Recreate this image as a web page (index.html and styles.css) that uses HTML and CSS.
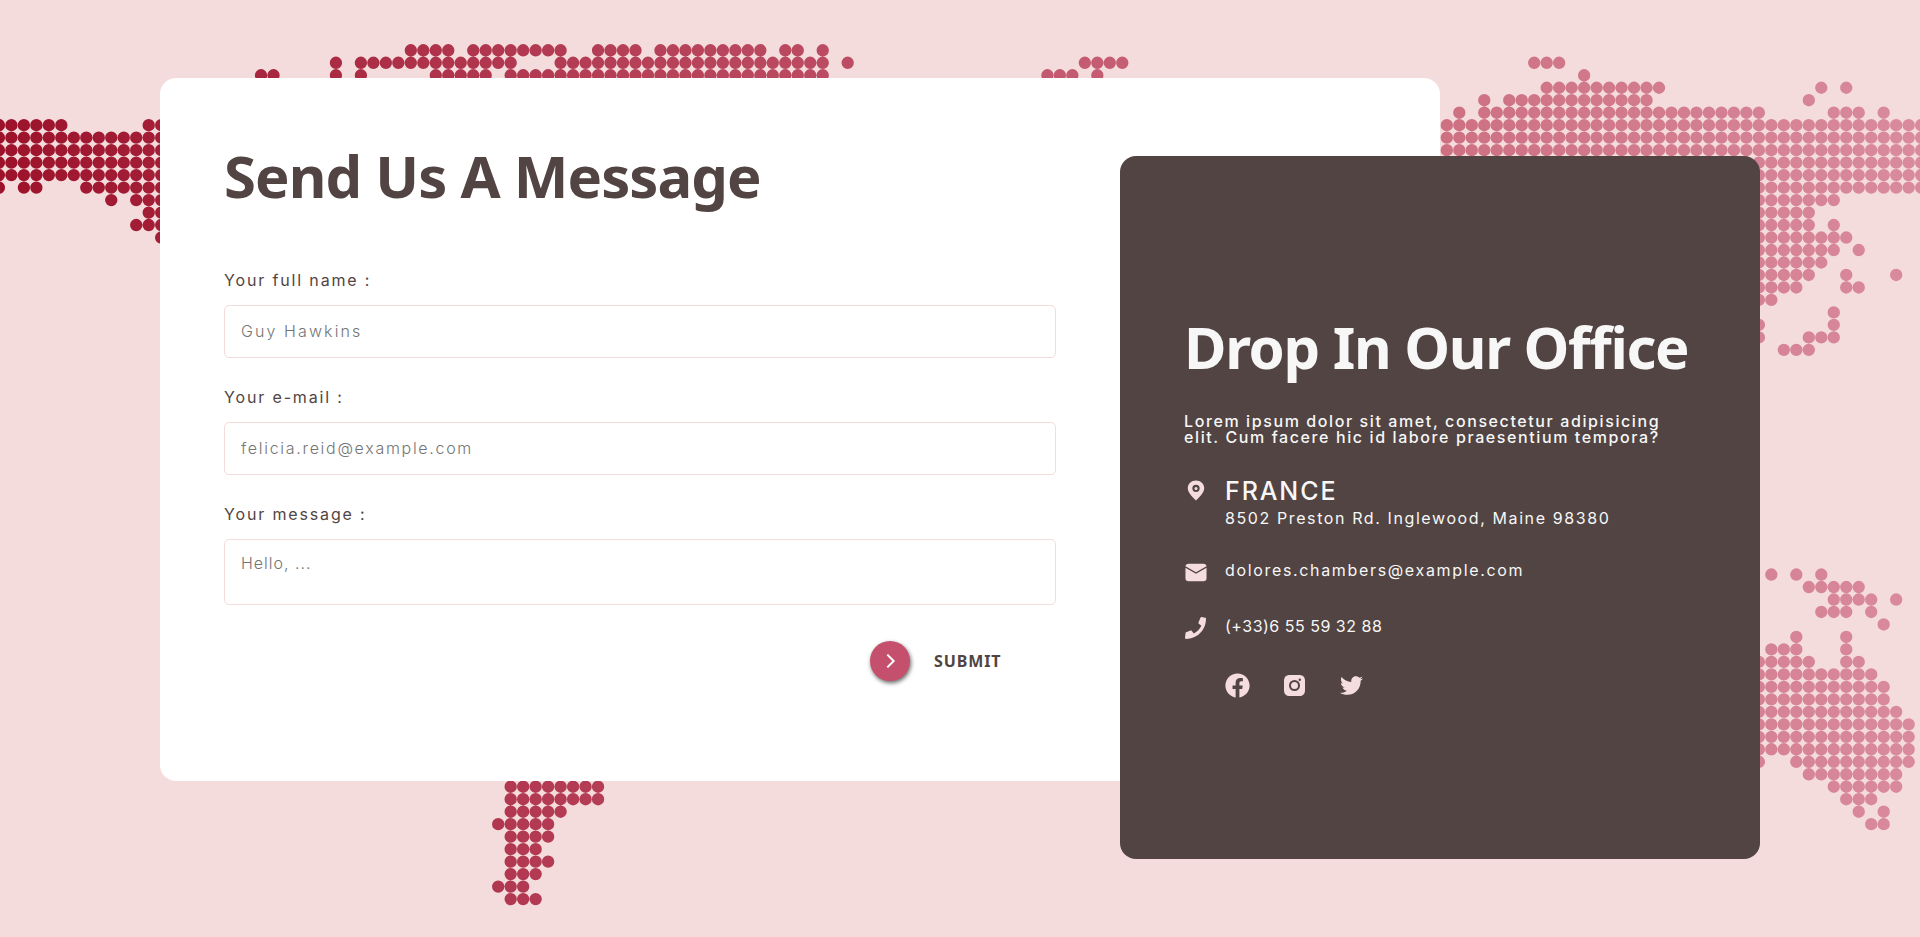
FILE: index.html
```html
<!DOCTYPE html>
<html lang="en">
<head>
<meta charset="utf-8">
<title>Contact</title>
<link rel="stylesheet" href="styles.css">
</head>
<body>
<main class="page">
  <!-- Dotted world map: one unit per dot, each run is a round-capped dashed line -->
  <svg class="map" viewBox="-0.9133 -4.03 153.822 75.068" preserveAspectRatio="none" aria-hidden="true">
    <defs>
      <linearGradient id="tint" gradientUnits="userSpaceOnUse" x1="-1" y1="0" x2="153" y2="0">
        <stop offset="0" stop-color="#9d122b"/>
        <stop offset=".28" stop-color="#b23a52"/>
        <stop offset=".6" stop-color="#c65f75"/>
        <stop offset=".75" stop-color="#cd7082"/>
        <stop offset="1" stop-color="#d98b9d"/>
      </linearGradient>
    </defs>
    <path class="dots" stroke="url(#tint)" d="
      M32 0H35.01M37 0H44.01M47 0H50.01M52 0H60.01M62 0H63.01M65 0H65.01
      M26 1H26.01M28 1H40.01M44 1H65.01M67 1H67.01M86 1H89.01M122 1H124.01
      M20 2H21.01M26 2H26.01M28 2H28.01M34 2H38.01M40 2H65.01M83 2H85.01M87 2H87.01M126 2H126.01
      M123 3H132.01M145 3H145.01M147 3H147.01
      M118 4H118.01M120 4H131.01M144 4H144.01
      M116 5H116.01M118 5H140.01M146 5H148.01M150 5H150.01
      M-1 6H4.01M11 6H12.01M115 6H153.01
      M-1 7H12.01M115 7H153.01
      M-1 8H12.01M115 8H153.01
      M-1 9H12.01M138 9H153.01
      M-1 10H12.01M138 10H153.01
      M-1 11H-.99M1 11H2.01M6 11H12.01M140 11H153.01
      M8 12H8.01M10 12H12.01M140 12H146.01
      M11 13H12.01M140 13H144.01
      M10 14H12.01M140 14H144.01M146 14H146.01
      M12 15H12.01M140 15H147.01
      M140 16H146.01M148 16H148.01
      M140 17H145.01
      M140 18H144.01M147 18H147.01M151 18H151.01
      M140 19H143.01M147 19H148.01
      M140 20H141.01
      M146 21H146.01
      M140 22H140.01M146 22H146.01
      M140 23H140.01M144 23H146.01
      M142 24H144.01
      M141 42H141.01M143 42H143.01M145 42H145.01
      M144 43H148.01
      M146 44H149.01M151 44H151.01
      M145 45H147.01M149 45H149.01
      M150 46H150.01
      M143 47H143.01M147 47H147.01
      M141 48H143.01M147 48H147.01
      M140 49H144.01M147 49H148.01
      M140 50H149.01
      M140 51H150.01
      M140 52H150.01
      M140 53H151.01
      M140 54H152.01
      M140 55H152.01
      M140 56H152.01
      M140 57H140.01M143 57H152.01
      M144 58H151.01
      M40 59H47.01M146 59H151.01
      M40 60H47.01M147 60H149.01
      M40 61H44.01M148 61H148.01M150 61H150.01
      M39 62H43.01M149 62H150.01
      M40 63H43.01
      M40 64H42.01
      M40 65H43.01
      M40 66H42.01
      M39 67H41.01
      M40 68H42.01"/>
  </svg>

  <section class="card">
    <form class="form">
      <h1 class="title">Send Us A Message</h1>
      <label class="field"><span class="label">Your full name :</span>
        <input class="control ph-name" type="text" placeholder="Guy Hawkins"></label>
      <label class="field"><span class="label">Your e-mail :</span>
        <input class="control ph-mail" type="email" placeholder="felicia.reid@example.com"></label>
      <label class="field"><span class="label">Your message :</span>
        <textarea class="control area" placeholder="Hello, ..."></textarea></label>
      <button class="submit" type="button">
        <span class="submit-disc"><svg width="10" height="16" viewBox="0 0 10 16"><path d="M1.300 1.600 7.700 8l-6.400 6.400" fill="none" stroke="#fff" stroke-width="2"/></svg></span>
        <span class="submit-text">SUBMIT</span>
      </button>
    </form>
  </section>

  <aside class="office">
    <h2 class="title office-title">Drop In Our Office</h2>
    <p class="intro">Lorem ipsum dolor sit amet, consectetur adipisicing<br>elit. Cum facere hic id labore praesentium tempora?</p>
    <div class="row row-place">
      <svg class="icon" viewBox="0 0 24 24"><path fill-rule="evenodd" d="M12 1.500c-5 0-9 3.700-9 8.400C3 15.500 9.300 21 12 23.500 14.700 21 21 15.500 21 9.900 21 5.200 17 1.500 12 1.500Zm0 4.700a4 4 0 1 1 0 8 4 4 0 0 1 0-8Zm0 2.400a1.700 1.700 0 1 0 0 3.400 1.700 1.700 0 0 0 0-3.400Z"/></svg>
      <div><div class="country">FRANCE</div><div class="street">8502 Preston Rd. Inglewood, Maine 98380</div></div>
    </div>
    <div class="row row-mail">
      <svg class="icon" viewBox="0 0 24 24"><path d="M4 3h16c2 0 3.500 1 3.500 2.700L12 12.300.500 5.700C.500 4 2 3 4 3ZM.500 7.400 12 14 23.500 7.400V19c0 2-1.300 3-3.500 3H4c-2.200 0-3.500-1-3.500-3Z"/></svg>
      <div class="mail">dolores.chambers@example.com</div>
    </div>
    <div class="row row-phone">
      <svg class="icon" viewBox="0 0 512 512"><path d="M493.400 24.600l-104-24c-11.300-2.600-22.900 3.300-27.500 13.900l-48 112c-4.200 9.800-1.400 21.300 6.900 28l60.600 49.600c-36 76.700-98.900 140.500-177.200 177.200l-49.600-60.600c-6.800-8.300-18.200-11.100-28-6.900l-112 48C3.900 466.500-2 478.100.600 489.400c3 14 12 22.600 23.400 22.600 256 0 464-207.500 464-464 0-11.200 5-20.900 5.400-23.400z"/></svg>
      <div class="phone">(+33)6 55 59 32 88</div>
    </div>
    <div class="social">
      <svg class="fb" viewBox="0 0 512 512"><path d="M504 256C504 119 393 8 256 8S8 119 8 256c0 123.780 90.690 226.380 209.250 245V327.690h-63V256h63v-54.640c0-62.150 37-96.480 93.670-96.480 27.140 0 55.520 4.840 55.520 4.840v61h-31.280c-30.800 0-40.410 19.120-40.410 38.730V256h68.780l-11 71.690h-57.780V501C413.310 482.380 504 379.780 504 256z"/></svg>
      <svg class="ig" viewBox="0 0 21 21"><path fill-rule="evenodd" d="M6 0h9c4 0 6 2 6 6v9c0 4-2 6-6 6H6c-4 0-6-2-6-6V6c0-4 2-6 6-6Zm4.500 5a5.500 5.500 0 1 0 0 11 5.500 5.500 0 0 0 0-11Zm0 2a3.500 3.500 0 1 1 0 7 3.500 3.500 0 0 1 0-7Zm5.300-3.400a1.200 1.200 0 1 0 0 2.400 1.200 1.200 0 0 0 0-2.400Z"/></svg>
      <svg class="tw" viewBox="0 48 512 416"><path d="M459.370 151.716c.325 4.548.325 9.097.325 13.645 0 138.720-105.583 298.558-298.558 298.558-59.452 0-114.680-17.219-161.137-47.106 8.447.974 16.568 1.299 25.340 1.299 49.055 0 94.213-16.568 130.274-44.832-46.132-.975-84.792-31.188-98.112-72.772 6.498.974 12.995 1.624 19.818 1.624 9.421 0 18.843-1.300 27.614-3.573-48.081-9.747-84.143-51.980-84.143-102.985v-1.299c13.969 7.797 30.214 12.670 47.431 13.319-28.264-18.843-46.781-51.005-46.781-87.391 0-19.492 5.197-37.360 14.294-52.954 51.655 63.675 129.300 105.258 216.365 109.807-1.624-7.797-2.599-15.918-2.599-24.040 0-57.828 46.782-104.934 104.934-104.934 30.213 0 57.502 12.670 76.670 33.137 23.715-4.548 46.456-13.320 66.599-25.340-7.798 24.366-24.366 44.833-46.132 57.827 21.117-2.273 41.584-8.122 60.426-16.243-14.292 20.791-32.161 39.308-52.628 54.253z"/></svg>
    </div>
  </aside>
</main>
</body>
</html>
```

FILE: styles.css
```css
* { box-sizing: border-box; margin: 0; padding: 0; }

body {
  font: 16px/16px Inter, "Noto Sans", sans-serif;
  background: #f4dcdc;
  color: #514442;
  overflow: hidden;
}

.page {
  position: relative;
  width: 1920px;
  height: 937px;
  padding: 78px 160px;
  overflow: hidden;
}

.map {
  position: absolute;
  inset: 0;
  width: 1920px;
  height: 937px;
}

.dots {
  fill: none;
  stroke-width: .99;
  stroke-linecap: round;
  stroke-dasharray: 0 1;
}

.card {
  position: relative;
  width: 1280px;
  height: 703px;
  padding: 69px 64px 0;
  background: #fff;
  border-radius: 16px;
}

/* The office panel overlaps the form card */
.office {
  position: absolute;
  left: 1120px;
  top: 156px;
  width: 640px;
  height: 703px;
  padding: 162px 64px 0;
  background: #514442;
  color: #f7f7f7;
  border-radius: 16px;
}

.form {
  display: flex;
  flex-direction: column;
  width: 832px;
}

.title {
  font: 700 58px/58px "Noto Sans", sans-serif;
  letter-spacing: -.95px;
  white-space: nowrap;
}

.form .title { margin-bottom: 67px; }
.office .office-title { letter-spacing: -1.3px; }

.field {
  display: flex;
  flex-direction: column;
  gap: 17px;
  margin-bottom: 31px;
}

.label { letter-spacing: 1.85px; white-space: nowrap; }

.control {
  height: 53px;
  padding: 0 16px 2px;
  font: 300 16px/20px Inter, "Noto Sans", sans-serif;
  letter-spacing: 1px;
  border: 1px solid #f4dcdc;
  border-radius: 5px;
  background: #fff;
  outline: none;
  resize: none;
}

.control::placeholder { color: #757575; }
.ph-name { letter-spacing: 2.1px; }
.ph-mail { letter-spacing: 1.7px; }

.area { height: 66px; padding-top: 13px; }

.submit {
  display: flex;
  align-items: center;
  align-self: flex-start;
  gap: 24px;
  margin: 5px 0 0 646px;
  border: 0;
  background: none;
  color: #514442;
}

.submit-disc {
  display: flex;
  align-items: center;
  justify-content: center;
  width: 40px;
  height: 40px;
  padding-left: 2px;
  border-radius: 50%;
  background: #c5506e;
  box-shadow: 1px 2px 4px rgba(0, 0, 0, .6);
}

.submit-text { font: 700 16px/16px "Noto Sans", sans-serif; letter-spacing: .9px; }

.intro { margin-top: 37px; font-weight: 500; letter-spacing: 1.6px; white-space: nowrap; }

.row { display: flex; gap: 18px; white-space: nowrap; }
.icon { width: 22px; height: 22px; margin-left: 1px; flex: none; }
.icon, .social svg { fill: #f4dcdf; }

.row-place { margin-top: 34px; }
.country { font-size: 25px; line-height: 25px; font-weight: 500; letter-spacing: 1.9px; }
.street { margin-top: 6px; letter-spacing: 1.6px; }
.row-mail { margin-top: 35px; }
.mail { margin-top: 1px; letter-spacing: 1.66px; }
.row-phone { margin-top: 34px; }
.phone { margin-top: 1px; letter-spacing: .5px; }

.social {
  display: flex;
  align-items: center;
  margin: 34px 0 0 41px;
}

.fb { width: 25px; height: 25px; }
.ig { width: 21px; height: 21px; margin-left: 34px; }
.tw { width: 23px; height: 19px; margin-left: 35px; }
```
